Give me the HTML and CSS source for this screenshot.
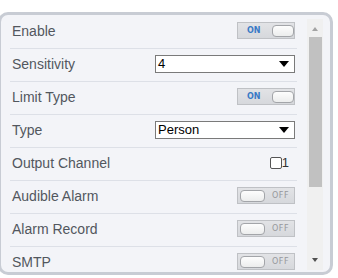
FILE: index.html
```html
<!DOCTYPE html>
<html>
<head>
<meta charset="utf-8">
<link rel="stylesheet" href="styles.css">
</head>
<body>
<div class="panel">
  <div class="list">
    <div class="row"><span class="label">Enable</span>
      <div class="toggle on"><span class="tlabel">ON</span><span class="knob"></span></div></div>
    <div class="row"><span class="label">Sensitivity</span>
      <div class="select"><span>4</span><span class="caret"></span></div></div>
    <div class="row"><span class="label">Limit Type</span>
      <div class="toggle on"><span class="tlabel">ON</span><span class="knob"></span></div></div>
    <div class="row"><span class="label">Type</span>
      <div class="select"><span>Person</span><span class="caret"></span></div></div>
    <div class="row"><span class="label">Output Channel</span>
      <div class="check"><span class="box"></span><span class="num">1</span></div></div>
    <div class="row"><span class="label">Audible Alarm</span>
      <div class="toggle off"><span class="knob"></span><span class="tlabel">OFF</span></div></div>
    <div class="row"><span class="label">Alarm Record</span>
      <div class="toggle off"><span class="knob"></span><span class="tlabel">OFF</span></div></div>
    <div class="row"><span class="label">SMTP</span>
      <div class="toggle off"><span class="knob"></span><span class="tlabel">OFF</span></div></div>
  </div>
  <div class="scroll">
    <div class="arrow up"></div>
    <div class="thumb"></div>
    <div class="spacer"></div>
    <div class="arrow down"></div>
  </div>
</div>
</body>
</html>
```
FILE: styles.css
```css
html, body { margin: 0; padding: 0; background: #fff; }
body { font-family: "Liberation Sans", Arial, sans-serif; }

.panel {
  margin: 12px 0 0 -2px;
  width: 335px;
  height: 263px;
  box-sizing: border-box;
  border: 3px solid #c8ccd4;
  border-radius: 10px;
  background: #f3f4f8;
  display: flex;
  overflow: hidden;
}

.list {
  margin-left: 9px;
  width: 287px;
  flex: none;
}

.row {
  height: 33px;
  box-sizing: border-box;
  padding: 0 2px 3px 2px;
  display: flex;
  align-items: center;
  justify-content: space-between;
  border-bottom: 1px solid #dde0e7;
  flex: none;
}
.row:first-child { height: 34px; padding-top: 1px; }

.label {
  font-size: 14px;
  color: #52575e;
}

.toggle {
  width: 58px;
  height: 17px;
  box-sizing: border-box;
  border: 1px solid #bfc1c5;
  background: linear-gradient(#e2e3e6, #d6d8dc);
  display: flex;
  align-items: center;
  font-size: 8px;
  font-weight: bold;
  font-family: "DejaVu Sans", sans-serif;
}
.toggle .knob {
  width: 25px;
  height: 12px;
  box-sizing: border-box;
  border: 1px solid #a3a5a9;
  border-radius: 4px;
  background: linear-gradient(#fdfdfd, #eceded);
}
.toggle.on .tlabel { color: #3a7ac6; margin-left: 9px; margin-right: 11px; }
.toggle.off .knob { margin-left: 2px; }
.toggle.off .tlabel { color: #96989c; margin-left: 7px; font-weight: normal; letter-spacing: 0.5px; }

.select {
  width: 140px;
  height: 18px;
  box-sizing: border-box;
  border: 1px solid #7a7a7a;
  background: #fff;
  display: flex;
  align-items: center;
  justify-content: space-between;
  padding: 0 5px 0 2px;
  font-size: 13px;
  color: #000;
}
.caret {
  width: 0;
  height: 0;
  border-left: 5.5px solid transparent;
  border-right: 5.5px solid transparent;
  border-top: 6px solid #000;
}

.check {
  display: flex;
  align-items: center;
  margin-right: 6px;
}
.check .box {
  width: 12px;
  height: 12px;
  box-sizing: border-box;
  border: 1px solid #555;
  border-radius: 2px;
  background: #fff;
}
.check .num {
  font-size: 13px;
  color: #333;
}

.scroll {
  margin: 4px 0 2px 10px;
  width: 16px;
  background: #f0f0f0;
  display: flex;
  flex-direction: column;
  align-items: center;
  flex: none;
}
.arrow {
  width: 0;
  height: 0;
  border-left: 3.5px solid transparent;
  border-right: 3.5px solid transparent;
}
.arrow.up {
  margin-top: 8px;
  border-bottom: 4px solid #a3a3a3;
}
.arrow.down {
  margin-bottom: 8px;
  border-top: 4px solid #505050;
}
.thumb {
  margin-top: 6px;
  width: 13px;
  height: 150px;
  background: #c1c1c1;
}
.spacer { flex: 1; }
```
